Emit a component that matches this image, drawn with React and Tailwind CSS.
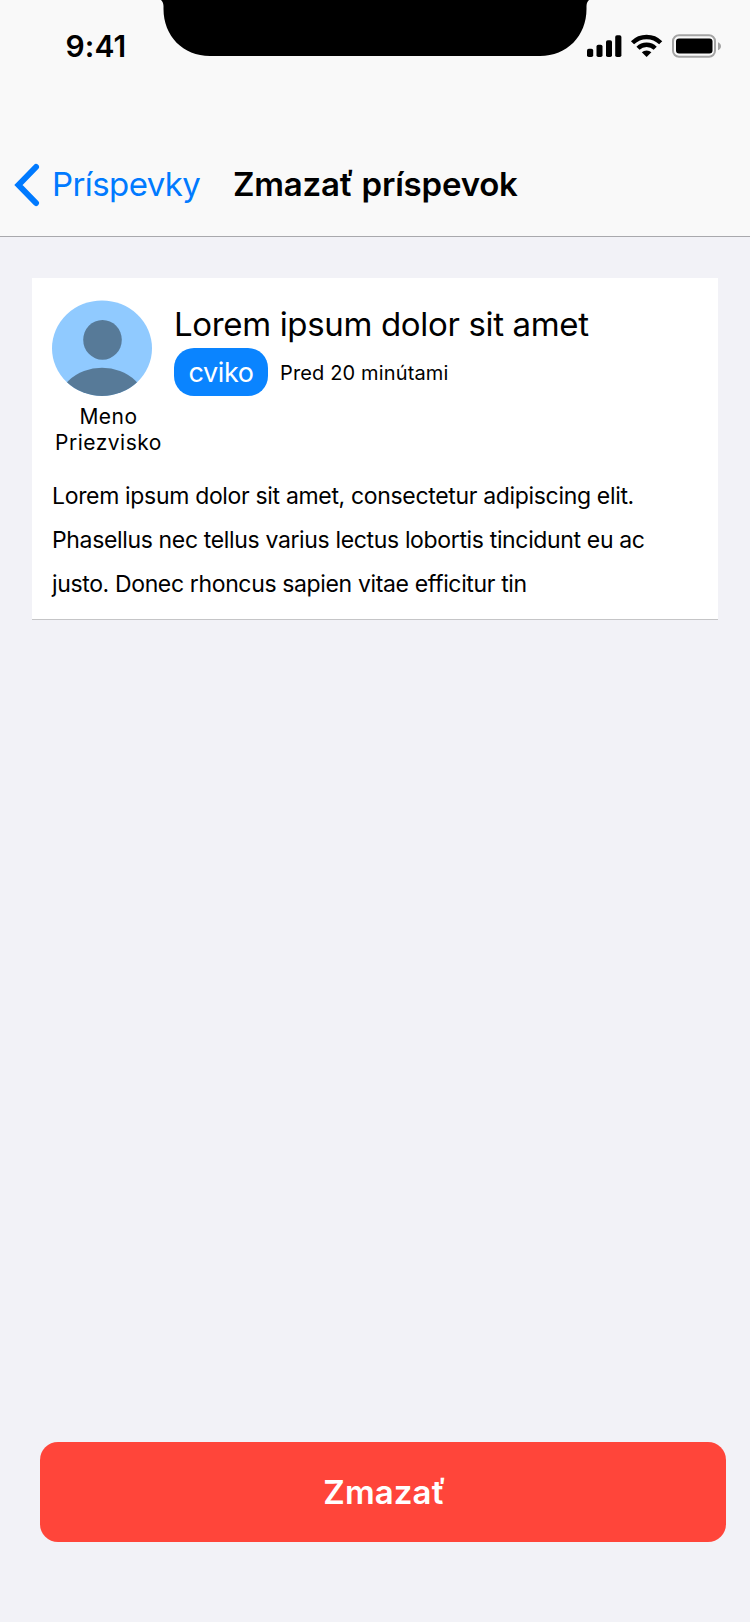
import React from 'react';

function Notch() {
  return (
    <svg className="absolute top-0 left-[161px]" width="428" height="56" viewBox="0 0 428 56" aria-hidden="true">
      <path d="M0 0C1.6 1.5 2.3 3 2.5 6V9C2.5 36 22 56 49 56H379C406 56 425.500 36 425.500 9V6C425.700 3 426.400 1.500 428 0Z" fill="#000" />
    </svg>
  );
}

function StatusIcons() {
  return (
    <svg className="mt-px" width="138" height="26" viewBox="0 0 138 26" aria-hidden="true">
      <rect x="2" y="15.700" width="6.200" height="8.300" rx="1.800" />
      <rect x="11.500" y="11.700" width="6" height="12.300" rx="1.800" />
      <rect x="21" y="7.200" width="6" height="16.800" rx="1.800" />
      <rect x="30.200" y="2.300" width="6.200" height="21.700" rx="1.800" />
      <g fill="none" stroke="#000" strokeWidth="4.400">
        <path d="M47.500 9.800A20 20 0 0 1 75.700 9.800" />
        <path d="M53 15.300A12.200 12.200 0 0 1 70.200 15.300" />
      </g>
      <path d="M61.600 24L56.800 19.300A7 7 0 0 1 66.400 19.300Z" />
      <rect x="88" y="2.200" width="42" height="21.500" rx="6" fill="none" stroke="#a4a4a4" strokeWidth="2" />
      <rect x="91" y="5.500" width="36.500" height="15" rx="3" />
      <path d="M133 9.200C137 10.700 137 15.700 133 17.200Z" fill="#a4a4a4" />
    </svg>
  );
}

function Avatar() {
  return (
    <div className="h-24 w-[100px] overflow-hidden">
      <svg width="100" height="96" viewBox="0 0 100 96" aria-hidden="true">
        <defs>
          <clipPath id="avatar">
            <ellipse cx="50" cy="48.200" rx="50" ry="47.800" />
          </clipPath>
        </defs>
        <g clipPath="url(#avatar)">
          <rect width="100" height="96" fill="#90caff" />
          <ellipse cx="50.500" cy="39.800" rx="19.300" ry="19.900" fill="#577a98" />
          <ellipse cx="50" cy="111" rx="47" ry="43.300" fill="#577a98" />
        </g>
      </svg>
    </div>
  );
}

export default function App() {
  return (
    <div className="flex h-[1622px] w-[750px] flex-col bg-[#f2f2f7] font-[Inter,sans-serif] text-black">
      <header className="relative flex h-[237px] flex-col justify-between border-b border-[#a9a9ad] bg-[#f9f9f9]">
        <Notch />
        <div className="flex h-[90px] items-center justify-between pr-[27px] pl-[65.500px]">
          <span className="pt-px text-[30px] leading-none font-semibold tracking-[0.100px]">9:41</span>
          <StatusIcons />
        </div>
        <nav className="flex h-[104px] items-center text-[33px] leading-10">
          <button className="flex w-[233px] items-center text-[#007aff]">
            <svg className="mt-[2px] ml-[13px] shrink-0" width="28" height="44" viewBox="0 0 28 44" fill="none" stroke="currentColor" strokeWidth="6" strokeLinecap="round" strokeLinejoin="miter" aria-hidden="true">
              <path d="M23 4L5.500 22L23 40" />
            </svg>
            <span className="ml-[11px] tracking-[-0.600px]">Príspevky</span>
          </button>
          <h1 className="font-semibold tracking-[-0.200px]">Zmazať príspevok</h1>
        </nav>
      </header>

      <main className="flex flex-1 flex-col justify-between pt-[41px] pb-20">
        <article className="mx-8 flex h-[342px] flex-col border-b border-[#c5c5c7] bg-white px-5 pt-[22px]">
          <div className="flex">
            <div className="flex w-[122px] flex-col">
              <Avatar />
              <p className="mt-[8px] mr-[9px] -ml-[0px] text-center text-[21px] leading-[26px] tracking-[0.500px]">
                Meno
                <br />
                Priezvisko
              </p>
            </div>
            <div className="flex flex-col">
              <h2 className="mt-[4px] h-11 text-[33px] leading-[40px] tracking-[-0.340px]">Lorem ipsum dolor sit amet</h2>
              <div className="flex h-12 items-center">
                <span className="flex h-12 w-[94px] items-center justify-center rounded-[20px] bg-[#0a84ff] pt-[2px] text-[27px] tracking-[-0.370px] text-white">
                  cviko
                </span>
                <span className="ml-3 pt-[2px] text-[20px] tracking-[0.140px]">Pred 20 minútami</span>
              </div>
            </div>
          </div>
          <p className="mt-[18px] text-[23px] leading-[44px] whitespace-nowrap">
            <span className="block tracking-[-0.330px]">Lorem ipsum dolor sit amet, consectetur adipiscing elit.</span>
            <span className="block tracking-[-0.350px]">Phasellus nec tellus varius lectus lobortis tincidunt eu ac</span>
            <span className="block tracking-[-0.360px]">justo. Donec rhoncus sapien vitae efficitur tin</span>
          </p>
        </article>

        <button className="mr-6 ml-10 h-[100px] rounded-[18px] bg-[#ff453a] pt-[2px] pl-[3px] text-[33px] font-semibold tracking-[0.100px] text-white">
          Zmazať
        </button>
      </main>
    </div>
  );
}
